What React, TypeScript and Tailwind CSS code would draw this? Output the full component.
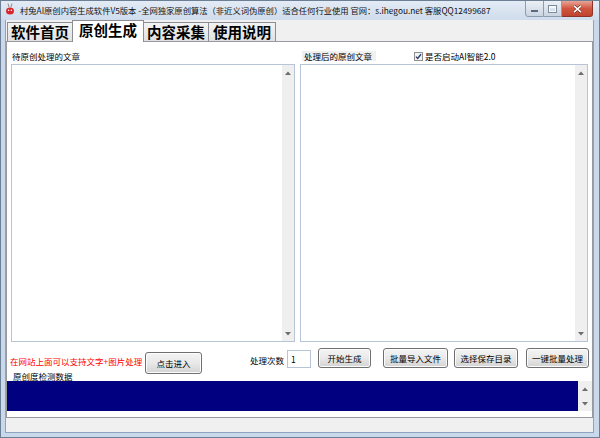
import React from "react";

type Kids = { children?: React.ReactNode; className?: string };

// Small triangle used on the disabled scrollbar buttons
function Arrow({ up }: { up?: boolean }) {
  return (
    <svg width="6" height="4" viewBox="0 0 6 4">
      {up ? <path d="M0 4 L3 0.5 L6 4 Z" fill="#6d6d6d" /> : <path d="M0 0 L3 3.5 L6 0 Z" fill="#6d6d6d" />}
    </svg>
  );
}

function VScroll({ className }: { className: string }) {
  return (
    <div className={className}>
      <div className="h-[15px] flex items-center justify-center">
        <Arrow up />
      </div>
      <div className="h-[15px] flex items-center justify-center">
        <Arrow />
      </div>
    </div>
  );
}

function WinButton({ children, className }: Kids) {
  return (
    <div className={className}>
      <span className="leading-[10px] text-[8.5px] whitespace-nowrap">{children}</span>
    </div>
  );
}

const btn =
  "flex items-center justify-center rounded-[3px] border border-[#707070] bg-linear-to-b from-[#f4f4f4] via-[#e9e9e9] to-[#d3d3d3] shadow-[inset_0_0_0_1px_#fcfcfc]";

function TextBox() {
  return (
    <div className="h-[278px] flex border border-[#b7c5d6] bg-white">
      <div className="flex-1" />
      <VScroll className="w-[12px] flex flex-col justify-between bg-[#efefef]" />
    </div>
  );
}

function AppIcon() {
  return (
    <svg width="10" height="12" viewBox="0 0 10 12">
      <path d="M3 0.5 L4 4 M7 0.5 L6 4" stroke="#8a8a8a" strokeWidth="1" />
      <ellipse cx="5" cy="8" rx="4" ry="3.6" fill="#d8262b" />
      <circle cx="3.6" cy="7.2" r="0.8" fill="#fff" />
      <circle cx="6.4" cy="7.2" r="0.8" fill="#fff" />
    </svg>
  );
}

function CheckBox() {
  return (
    <svg width="9" height="9" viewBox="0 0 9 9">
      <rect x="0.5" y="0.5" width="8" height="8" fill="#f1f3f5" stroke="#8e8f8f" />
      <path d="M2 4.6 L3.7 6.5 L7 2.2" stroke="#2f3d68" strokeWidth="1.4" fill="none" />
    </svg>
  );
}

const tabBase =
  "flex items-center justify-center border border-b-0 border-[#8c8e94] text-[14.5px] font-bold leading-none whitespace-nowrap";

export default function App() {
  return (
    <div className="w-[600px] h-[438px] flex flex-col overflow-hidden border border-[#6d7f95] bg-[#c9d8ea] text-black font-['Noto_Sans_CJK_SC','Liberation_Sans',sans-serif]">
      {/* title bar */}
      <div className="h-[19px] flex items-start bg-linear-to-b from-[#e3ebf5] to-[#cfdcec]">
        <div className="ml-[4px] mt-[2px] w-[10px] h-[12px]">
          <AppIcon />
        </div>
        <div className="ml-[5px] mt-[4px] text-[8.3px] leading-[10px] whitespace-nowrap text-[#111]">
          村兔AI原创内容生成软件V5版本 -全网独家原创算法（非近义词伪原创）适合任何行业使用 官网：s.ihegou.net 客服QQ12499687
        </div>
        <div className="flex-1" />
        <div className="mr-[6px] -mt-px flex h-[17px]">
          <div className="w-[19px] flex items-center justify-center border border-[#8c9db1] rounded-bl-[3px] bg-linear-to-b from-[#edf1f6] to-[#c9d4e1]">
            <div className="mt-[5px] w-[7px] h-[2px] bg-white border-[0.5px] border-[#5a6a7e]" />
          </div>
          <div className="w-[18px] flex items-center justify-center border border-l-0 border-[#8c9db1] bg-linear-to-b from-[#edf1f6] to-[#c9d4e1]">
            <div className="w-[7px] h-[6px] border border-t-2 border-[#f7f9fb] outline outline-[0.5px] outline-[#7b8a9c]" />
          </div>
          <div className="w-[31px] flex items-center justify-center border border-l-0 border-[#8c3427] rounded-br-[3px] bg-linear-to-b from-[#e7a597] via-[#d0553f] to-[#c0432d]">
            <svg width="9" height="8" viewBox="0 0 9 8">
              <path d="M1 0.8 L8 7.2 M8 0.8 L1 7.2" stroke="#5b1b12" strokeWidth="2.6" />
              <path d="M1 0.8 L8 7.2 M8 0.8 L1 7.2" stroke="#ffffff" strokeWidth="1.6" />
            </svg>
          </div>
        </div>
      </div>

      {/* client area */}
      <div className="flex-1 ml-[4px] mr-[5px] mb-[4px] flex flex-col border border-t-0 border-[#8ea3bf] bg-[#f0f0f0]">
        {/* tab strip */}
        <div className="h-[21px] flex items-end pl-[1px]">
          <div className={`${tabBase} w-[66px] h-[19px] bg-linear-to-b from-[#f3f3f3] to-[#e1e1e1]`}>软件首页</div>
          <div className={`${tabBase} relative z-10 w-[72px] h-[22px] -mb-px -ml-px bg-white pb-[2px]`}>原创生成</div>
          <div className={`${tabBase} w-[66px] h-[19px] -ml-px bg-linear-to-b from-[#f3f3f3] to-[#e1e1e1]`}>内容采集</div>
          <div className={`${tabBase} w-[68px] h-[19px] -ml-px bg-linear-to-b from-[#f3f3f3] to-[#e1e1e1]`}>使用说明</div>
        </div>

        {/* tab page */}
        <div className="h-[377px] flex flex-col border border-[#989aa0] bg-white">
          <div className="flex px-[4px] gap-[5px]">
            <div className="w-[285px] flex flex-col">
              <div className="h-[22px] flex items-end pb-[3px] pl-[1px]">
                <span className="text-[8.5px] leading-[10px] whitespace-nowrap">待原创处理的文章</span>
              </div>
              <TextBox />
            </div>
            <div className="w-[289px] flex flex-col">
              <div className="h-[22px] flex items-end pb-[3px]">
                <span className="ml-[2px] w-[74px] h-[10px] pl-[2px] bg-[#f0f0f0] text-[8.5px] leading-[10px] whitespace-nowrap">
                  处理后的原创文章
                </span>
                <div className="ml-[38px] flex items-center gap-[2px] h-[10px]">
                  <CheckBox />
                  <span className="text-[8.5px] leading-[10px] whitespace-nowrap">是否启动AI智能2.0</span>
                </div>
              </div>
              <TextBox />
            </div>
          </div>

          {/* action row */}
          <div className="mt-[6px] h-[24px] flex items-start">
            <span className="ml-[3px] w-[135px] mt-[8px] text-[8.5px] leading-[10px] whitespace-nowrap text-[#ff0000]">
              在网站上面可以支持文字+图片处理
            </span>
            <WinButton className={`${btn} w-[57px] h-[22px] mt-[4px]`}>点击进入</WinButton>
            <span className="ml-[48px] w-[37px] mt-[7px] text-[8.5px] leading-[10px] whitespace-nowrap">处理次数</span>
            <div className="w-[24px] h-[18px] mt-[2px] flex items-center pl-[3px] border border-[#b7c5d6] bg-white text-[8.5px] leading-[10px]">
              1
            </div>
            <WinButton className={`${btn} ml-[7px] w-[53px] h-[20px]`}>开始生成</WinButton>
            <WinButton className={`${btn} ml-[12px] w-[65px] h-[20px]`}>批量导入文件</WinButton>
            <WinButton className={`${btn} ml-[6px] w-[64px] h-[20px]`}>选择保存目录</WinButton>
            <WinButton className={`${btn} ml-[8px] w-[63px] h-[20px]`}>一键批量处理</WinButton>
          </div>

          <div className="h-[9px] pl-[6px] text-[8.5px] leading-[9px] whitespace-nowrap">原创度检测数据</div>

          {/* detection output */}
          <div className="h-[30px] flex">
            <div className="flex-1 bg-[#000080]" />
            <VScroll className="w-[14px] flex flex-col justify-between bg-[#efefef]" />
          </div>
          <div className="flex-1" />
        </div>
        <div className="flex-1" />
      </div>
    </div>
  );
}
